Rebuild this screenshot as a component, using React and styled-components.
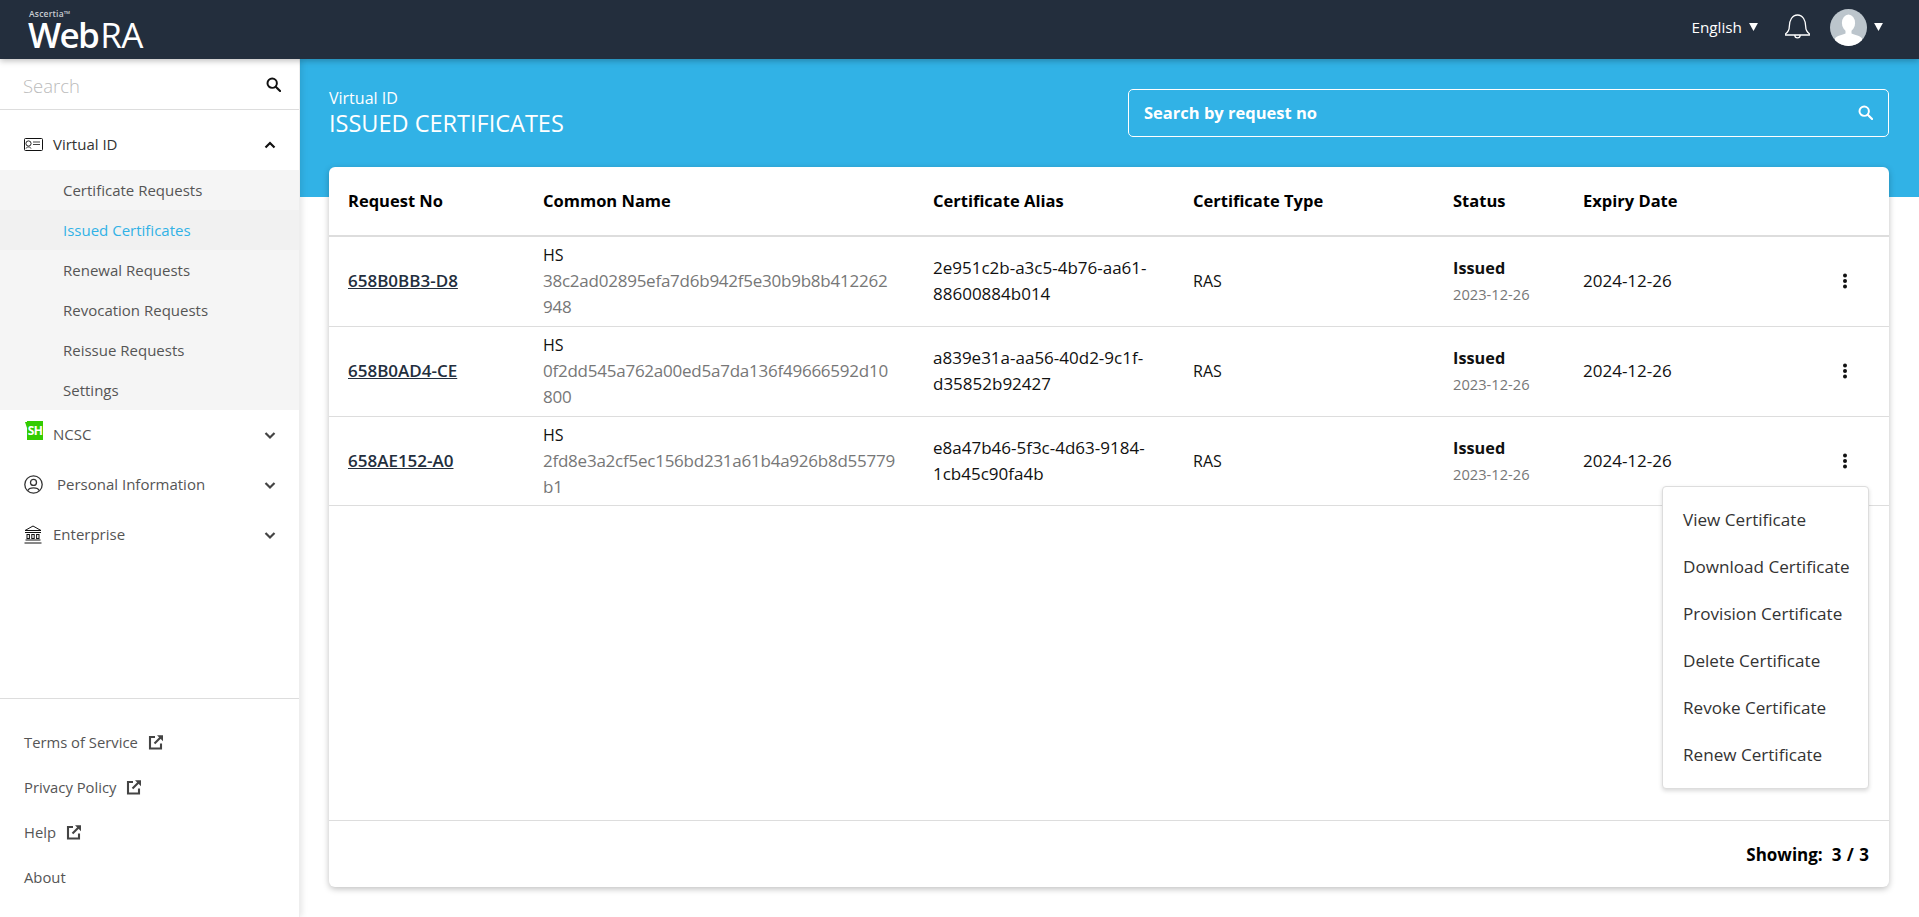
import React from "react";
import styled, { createGlobalStyle } from "styled-components";

const font = `"Open Sans", "Noto Sans", "Liberation Sans", sans-serif`;
const GRID = "194px 390px 260px 260px 130px 1fr 65px";

const Global = createGlobalStyle`
  html, body { margin: 0; padding: 0; height: 100%; overflow: hidden; background: #fff; }
  body { font-family: ${font}; color: #111; }
  * { box-sizing: border-box; }
`;
const Page = styled.div`width: 1919px; height: 917px; display: flex; flex-direction: column; overflow: hidden;`;
const TopBar = styled.header`
  height: 59px; flex: none; background: #232e3d; display: flex; align-items: center;
  padding: 0 36px 5px 28px; position: relative; z-index: 3; box-shadow: 0 2px 6px rgba(0,0,0,.25);
`;
const Logo = styled.div`display: flex; flex-direction: column; color: #fff; line-height: 1; margin-top: 6px;`;
const LogoSmall = styled.span`font-size: 8.5px; font-weight: 600; color: #c9cdd2; letter-spacing: .2px; margin-left: 1px; height: 9px;`;
const LogoMain = styled.span`font-size: 35px; font-weight: 600; letter-spacing: -1.6px; line-height: 32px;`;
const LogoThin = styled.span`font-weight: 400; margin-left: 2px; letter-spacing: -.6px;`;
const TopRight = styled.div`margin-left: auto; display: flex; align-items: center;`;
const Lang = styled.span`font-size: 15.3px; color: #fff; margin-right: 7px;`;
const Caret = styled.svg`width: 9px; height: 8px; display: block;`;
const AvatarGap = styled.span`width: 7px;`;
const BellWrap = styled.div`margin: 0 20px 0 27px; display: flex;`;

const Body = styled.div`flex: 1; display: flex; min-height: 0;`;
const Sidebar = styled.aside`
  width: 300px; flex: none; display: flex; flex-direction: column; background: #fff;
  border-right: 1px solid #eee; box-shadow: 2px 0 6px rgba(0,0,0,.1); position: relative; z-index: 2;
`;
const SideSearch = styled.div`
  height: 51px; flex: none; border-bottom: 1px solid #ddd; display: flex; align-items: center;
  justify-content: space-between; padding: 0 18px 0 23px;
`;
const SidePlaceholder = styled.span`font-size: 18.5px; font-weight: 300; color: #bbb; padding-top: 2px;`;
const Nav = styled.nav`flex: 1; padding-top: 10px;`;
const NavRow = styled.div`
  height: 50px; display: flex; align-items: center; padding: 0 22px 2px 24px; font-size: 15px;
  color: ${p => (p.$open ? "#333" : "#555")};
`;
const NavIcon = styled.span`width: ${p => p.$w || 29}px; flex: none; display: flex; align-items: center;`;
const NavLabel = styled.span`flex: 1;`;
const ChevronBox = styled.span`display: flex; margin-top: 1px;`;
const SubMenu = styled.div`background: #f5f5f5;`;
const SubItem = styled.div`
  height: 40px; display: flex; align-items: center; padding: 0 0 1px 63px; font-size: 15px;
  color: ${p => (p.$active ? "#31b2e6" : "#555")};
  background: ${p => (p.$active ? "#f1f1f1" : "transparent")};
`;
const ShBadge = styled.span`
  position: relative; width: 16px; height: 19px; background: #33cc00; color: #fff; font-size: 12px; font-weight: 700;
  display: flex; align-items: center; justify-content: center; margin: -8px 0 0 3px; letter-spacing: -.6px;
  &::before { content: ""; position: absolute; left: -2px; top: 1px; border-top: 6px solid #33cc00; border-left: 2px solid transparent; }
`;
const SideFooter = styled.div`height: 219px; flex: none; border-top: 1px solid #ddd; padding-top: 20px;`;
const FooterLink = styled.div`height: 45px; display: flex; align-items: center; padding-left: 24px; font-size: 14.8px; color: #555; gap: 10px;`;

const Main = styled.main`flex: 1; min-width: 0; display: flex; flex-direction: column;`;
const Band = styled.div`
  height: 138px; flex: none; background: #31b2e6; color: #fff; padding: 30px 30px 0 29px;
  display: flex; align-items: flex-start; justify-content: space-between;
`;
const BandTitle = styled.div`margin-top: -1px;`;
const Crumb = styled.div`font-size: 16px; line-height: 20px;`;
const Heading = styled.h1`font-size: 23.5px; font-weight: 400; line-height: 30px; margin: 0;`;
const BandSearch = styled.div`
  width: 761px; height: 48px; border: 1.5px solid #fff; border-radius: 5px; display: flex; align-items: center;
  justify-content: space-between; padding: 0 15px 1px; font-size: 16.5px; font-weight: 700;
`;
const Card = styled.section`
  position: relative; margin: -30px 30px 0 29px; height: 720px; background: #fff; border-radius: 6px;
  box-shadow: 0 2px 6px rgba(0,0,0,.25); display: flex; flex-direction: column;
`;
const TableArea = styled.div`flex: 1;`;
const HeadRow = styled.div`
  height: 70px; display: grid; grid-template-columns: ${GRID}; align-items: center; border-bottom: 2px solid #ddd;
  font-weight: 700; font-size: 16.5px; color: #000;
`;
const Row = styled.div`
  height: 90px; display: grid; grid-template-columns: ${GRID}; align-items: center; border-bottom: 1px solid #ddd;
  font-size: 16px; color: #111; padding-bottom: 1px;
  &:last-child { height: 89px; padding-bottom: 0; }
`;
const Cell = styled.div`padding-left: 20px; white-space: nowrap; line-height: 26px;`;
const FirstCell = styled(Cell)`padding-left: 19px;`;
const NumericCell = styled(Cell)`font-size: 17px;`;
const ReqLink = styled.a`color: #232e3d; text-decoration: underline; font-weight: 600; font-size: 17px;`;
const Muted = styled.div`color: #777; font-size: 17px; letter-spacing: -.24px;`;
const StatusName = styled.div`font-weight: 700; font-size: 16.3px;`;
const StatusDate = styled.div`color: #777; font-size: 14.7px;`;
const Kebab = styled.div`display: flex; justify-content: center; padding-right: 24px;`;
const CardFooter = styled.div`
  height: 67px; flex: none; border-top: 1px solid #ddd; display: flex; align-items: center; justify-content: flex-end;
  padding-right: 20px; font-size: 17px; font-weight: 700; color: #000; gap: 9px; word-spacing: 1px;
`;
const Menu = styled.div`
  position: absolute; top: 319px; right: 20px; width: 207px; height: 303px; background: #fff; padding: 9px 0 10px;
  border: 1px solid #ddd; border-radius: 4px; box-shadow: 0 2px 4px rgba(0,0,0,.15); z-index: 2;
`;
const MenuItem = styled.div`height: 47px; display: flex; align-items: center; padding-left: 20px; font-size: 17.1px; color: #333; white-space: nowrap;`;

const Chevron = ({ up, color = "#444" }) => (
  <svg width="14" height="14" viewBox="0 0 14 14"><path d={up ? "M2.5 9.5 7 5l4.5 4.5" : "M2.5 5 7 9.5 11.5 5"} fill="none" stroke={color} strokeWidth="2.2" /></svg>
);
const SearchIcon = ({ color = "#111", size = 16 }) => (
  <svg width={size} height={size} viewBox="0 0 16 16"><circle cx="6.6" cy="6.6" r="5" fill="none" stroke={color} strokeWidth="2.1" /><path d="m10.4 10.4 4.6 4.6" stroke={color} strokeWidth="2.3" strokeLinecap="round" /></svg>
);
const External = () => (
  <svg width="16" height="16" viewBox="0 0 16 16" fill="none" stroke="#444" strokeWidth="2.1"><path d="M7 3H2v11.500h11V9.500" /><path d="M6.500 9.500 13.500 2.500" /><path d="M9 1.200h6v6z" fill="#444" stroke="none" /></svg>
);
const IdCard = () => (
  <svg width="19" height="13" viewBox="0 0 19 13" fill="none" stroke="#111"><rect x=".5" y=".5" width="18" height="12" rx="1" strokeWidth="1" /><circle cx="4.500" cy="5.500" r="2.600" strokeWidth=".9" /><path d="M2 10.500c.5-2 4.500-2 5 0M9 4h7M9 6.500h7" strokeWidth=".8" /></svg>
);
const PersonCircle = () => (
  <svg width="19" height="19" viewBox="0 0 19 19" fill="none" stroke="#333" strokeWidth="1.3"><circle cx="9.500" cy="9.500" r="8.700" /><circle cx="9.500" cy="7.400" r="3" /><path d="M4 15.500c1-3.600 10-3.600 11 0" /></svg>
);
const Bank = () => (
  <svg width="18" height="19" viewBox="0 0 18 19" fill="none" stroke="#111" strokeWidth="1"><path d="M1 5.500 9 1l8 4.500zM1 7.500h16M1.500 15h15M.5 18h17" /><rect x="3" y="9.500" width="2.400" height="4" /><rect x="7.800" y="9.500" width="2.400" height="4" /><rect x="12.600" y="9.500" width="2.400" height="4" /></svg>
);
const Bell = () => (
  <svg width="25" height="26" viewBox="0 0 25 26" fill="none" stroke="#fff" strokeWidth="1.3"><path d="M.7 21h23.600v-1.300c-2.500-1.800-3.600-3.600-3.600-7.200 0-6-2.800-11.500-8.200-11.500S4.300 6.500 4.300 12.500c0 3.600-1.100 5.400-3.600 7.200z" /><path d="M9.800 21c0 3.800 5.400 3.800 5.400 0" /></svg>
);
const Avatar = () => (
  <svg width="37" height="37" viewBox="0 0 37 37"><defs><clipPath id="av"><circle cx="18.500" cy="18.500" r="18.500" /></clipPath></defs><g clipPath="url(#av)"><rect width="37" height="37" fill="#bcc5cc" /><ellipse cx="18.500" cy="14" rx="6.600" ry="8.600" fill="#fff" /><path d="M15.500 20h6v4.500c3 1.600 9 2.200 10.500 5V37H5v-7.500c1.500-2.800 7.500-3.400 10.500-5z" fill="#fff" /></g></svg>
);
const CaretDown = () => (<Caret viewBox="0 0 10 9"><path d="M0 0h10L5 9z" fill="#fff" /></Caret>);
const Dots = () => (
  <svg width="6" height="16" viewBox="0 0 6 16" fill="#111"><circle cx="3" cy="2.500" r="2" /><circle cx="3" cy="8" r="2" /><circle cx="3" cy="13.500" r="2" /></svg>
);

const rows = [
  { no: "658B0BB3-D8", h1: "38c2ad02895efa7d6b942f5e30b9b8b412262", h2: "948", a1: "2e951c2b-a3c5-4b76-aa61-", a2: "88600884b014" },
  { no: "658B0AD4-CE", h1: "0f2dd545a762a00ed5a7da136f49666592d10", h2: "800", a1: "a839e31a-aa56-40d2-9c1f-", a2: "d35852b92427" },
  { no: "658AE152-A0", h1: "2fd8e3a2cf5ec156bd231a61b4a926b8d55779", h2: "b1", a1: "e8a47b46-5f3c-4d63-9184-", a2: "1cb45c90fa4b" },
];
const subs = ["Certificate Requests", "Issued Certificates", "Renewal Requests", "Revocation Requests", "Reissue Requests", "Settings"];
const menu = ["View Certificate", "Download Certificate", "Provision Certificate", "Delete Certificate", "Revoke Certificate", "Renew Certificate"];

export default function App() {
  return (
    <Page>
      <Global />
      <TopBar>
        <Logo>
          <LogoSmall>Ascertia™</LogoSmall>
          <LogoMain>Web<LogoThin>RA</LogoThin></LogoMain>
        </Logo>
        <TopRight>
          <Lang>English</Lang>
          <CaretDown />
          <BellWrap><Bell /></BellWrap>
          <Avatar />
          <AvatarGap />
          <CaretDown />
        </TopRight>
      </TopBar>
      <Body>
        <Sidebar>
          <SideSearch>
            <SidePlaceholder>Search</SidePlaceholder>
            <SearchIcon size={15} />
          </SideSearch>
          <Nav>
            <NavRow $open><NavIcon><IdCard /></NavIcon><NavLabel>Virtual ID</NavLabel><ChevronBox><Chevron up color="#111" /></ChevronBox></NavRow>
            <SubMenu>
              {subs.map(s => <SubItem key={s} $active={s === "Issued Certificates"}>{s}</SubItem>)}
            </SubMenu>
            <NavRow><NavIcon><ShBadge>SH</ShBadge></NavIcon><NavLabel>NCSC</NavLabel><ChevronBox><Chevron /></ChevronBox></NavRow>
            <NavRow><NavIcon $w={33}><PersonCircle /></NavIcon><NavLabel>Personal Information</NavLabel><ChevronBox><Chevron /></ChevronBox></NavRow>
            <NavRow><NavIcon><Bank /></NavIcon><NavLabel>Enterprise</NavLabel><ChevronBox><Chevron /></ChevronBox></NavRow>
          </Nav>
          <SideFooter>
            <FooterLink>Terms of Service <External /></FooterLink>
            <FooterLink>Privacy Policy <External /></FooterLink>
            <FooterLink>Help <External /></FooterLink>
            <FooterLink>About</FooterLink>
          </SideFooter>
        </Sidebar>
        <Main>
          <Band>
            <BandTitle>
              <Crumb>Virtual ID</Crumb>
              <Heading>ISSUED CERTIFICATES</Heading>
            </BandTitle>
            <BandSearch>Search by request no<SearchIcon color="#fff" size={15} /></BandSearch>
          </Band>
          <Card>
            <TableArea>
              <HeadRow>
                <FirstCell>Request No</FirstCell><Cell>Common Name</Cell><Cell>Certificate Alias</Cell>
                <Cell>Certificate Type</Cell><Cell>Status</Cell><Cell>Expiry Date</Cell><Cell />
              </HeadRow>
              {rows.map(r => (
                <Row key={r.no}>
                  <FirstCell><ReqLink>{r.no}</ReqLink></FirstCell>
                  <Cell>HS<Muted>{r.h1}</Muted><Muted>{r.h2}</Muted></Cell>
                  <NumericCell>{r.a1}<br />{r.a2}</NumericCell>
                  <Cell>RAS</Cell>
                  <Cell><StatusName>Issued</StatusName><StatusDate>2023-12-26</StatusDate></Cell>
                  <NumericCell>2024-12-26</NumericCell>
                  <Kebab><Dots /></Kebab>
                </Row>
              ))}
            </TableArea>
            <CardFooter>Showing: <span>3 / 3</span></CardFooter>
            <Menu>{menu.map(m => <MenuItem key={m}>{m}</MenuItem>)}</Menu>
          </Card>
        </Main>
      </Body>
    </Page>
  );
}
